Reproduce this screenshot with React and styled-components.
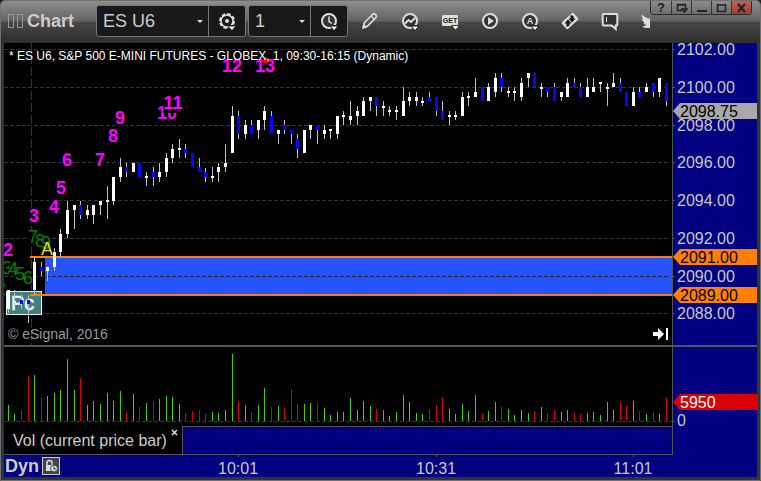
import React from 'react'
import styled, { createGlobalStyle } from 'styled-components'

const BARS = [
    // high, body top, body bottom, low, up/down, volume, volume up/down
    [290, 290, 309, 313, 'u', 16, 'u'],
    [290, 301, 303, 305, 'u', 7, 'u'],
    [295, 300, 304, 309, 'd', 11, 'd'],
    [295, 300, 304, 323, 'd', 45, 'd'],
    [257, 262, 290, 295, 'u', 46, 'u'],
    [262, 267, 271, 276, 'd', 23, 'd'],
    [267, 267, 271, 281, 'u', 25, 'u'],
    [248, 252, 267, 271, 'u', 28, 'u'],
    [229, 234, 252, 257, 'u', 31, 'u'],
    [201, 210, 234, 238, 'u', 62, 'u'],
    [205, 205, 210, 229, 'u', 31, 'u'],
    [201, 205, 215, 219, 'd', 43, 'd'],
    [205, 210, 215, 219, 'u', 16, 'u'],
    [205, 205, 215, 224, 'u', 20, 'u'],
    [201, 201, 205, 215, 'u', 17, 'u'],
    [186, 200, 202, 219, 'u', 28, 'u'],
    [177, 177, 201, 205, 'u', 20, 'u'],
    [158, 167, 177, 182, 'u', 30, 'u'],
    [163, 167, 172, 177, 'd', 9, 'd'],
    [163, 163, 172, 172, 'u', 27, 'u'],
    [163, 163, 177, 177, 'd', 14, 'd'],
    [172, 176, 178, 186, 'u', 18, 'u'],
    [167, 172, 177, 186, 'd', 20, 'd'],
    [163, 172, 177, 182, 'u', 22, 'u'],
    [153, 158, 172, 177, 'u', 25, 'u'],
    [144, 149, 158, 163, 'u', 24, 'u'],
    [139, 148, 150, 158, 'u', 17, 'u'],
    [144, 149, 153, 158, 'd', 8, 'd'],
    [153, 153, 167, 167, 'd', 10, 'd'],
    [158, 167, 172, 172, 'd', 11, 'd'],
    [168, 172, 177, 182, 'd', 7, 'd'],
    [167, 176, 178, 182, 'u', 9, 'u'],
    [163, 167, 172, 182, 'u', 8, 'u'],
    [144, 163, 167, 172, 'u', 11, 'u'],
    [106, 116, 153, 153, 'u', 67, 'u'],
    [111, 116, 134, 139, 'd', 20, 'd'],
    [120, 125, 134, 139, 'u', 16, 'u'],
    [120, 125, 134, 134, 'd', 9, 'd'],
    [120, 120, 130, 139, 'u', 16, 'u'],
    [106, 111, 120, 130, 'u', 33, 'u'],
    [111, 116, 134, 134, 'd', 14, 'd'],
    [130, 130, 134, 144, 'u', 15, 'u'],
    [120, 125, 130, 134, 'd', 13, 'd'],
    [130, 130, 134, 144, 'd', 32, 'd'],
    [134, 139, 149, 158, 'd', 17, 'd'],
    [130, 130, 153, 153, 'u', 17, 'u'],
    [125, 125, 130, 139, 'u', 18, 'u'],
    [125, 125, 130, 144, 'd', 18, 'd'],
    [125, 130, 134, 139, 'u', 13, 'u'],
    [129, 129, 131, 139, 'u', 6, 'u'],
    [116, 116, 134, 139, 'u', 9, 'u'],
    [111, 115, 117, 125, 'u', 9, 'u'],
    [101, 116, 120, 125, 'u', 23, 'u'],
    [106, 111, 116, 125, 'u', 11, 'u'],
    [97, 101, 116, 116, 'u', 20, 'u'],
    [97, 97, 101, 111, 'u', 15, 'u'],
    [97, 97, 106, 116, 'd', 12, 'd'],
    [101, 106, 108, 116, 'u', 11, 'u'],
    [106, 110, 112, 116, 'u', 5, 'u'],
    [106, 110, 112, 120, 'u', 9, 'u'],
    [87, 101, 116, 116, 'u', 26, 'u'],
    [92, 97, 101, 106, 'u', 19, 'u'],
    [92, 97, 101, 106, 'u', 8, 'u'],
    [97, 101, 103, 106, 'u', 7, 'u'],
    [92, 97, 101, 101, 'd', 12, 'd'],
    [97, 97, 111, 116, 'd', 16, 'd'],
    [101, 111, 120, 120, 'd', 24, 'd'],
    [111, 115, 117, 125, 'u', 12, 'u'],
    [111, 115, 117, 120, 'u', 7, 'u'],
    [92, 97, 116, 116, 'u', 17, 'u'],
    [92, 96, 98, 106, 'u', 10, 'u'],
    [78, 92, 97, 97, 'u', 26, 'u'],
    [87, 87, 101, 101, 'd', 8, 'd'],
    [83, 87, 101, 101, 'u', 10, 'u'],
    [73, 78, 92, 97, 'u', 19, 'u'],
    [73, 78, 87, 92, 'd', 14, 'd'],
    [87, 91, 93, 97, 'u', 12, 'u'],
    [87, 91, 93, 101, 'u', 6, 'u'],
    [78, 83, 97, 101, 'u', 11, 'u'],
    [73, 73, 78, 87, 'u', 8, 'u'],
    [73, 73, 87, 87, 'd', 10, 'd'],
    [83, 87, 89, 97, 'u', 14, 'u'],
    [87, 87, 92, 97, 'd', 8, 'd'],
    [83, 87, 101, 101, 'd', 11, 'd'],
    [92, 92, 97, 101, 'u', 9, 'u'],
    [78, 83, 97, 97, 'u', 11, 'u'],
    [78, 83, 87, 87, 'd', 8, 'd'],
    [83, 87, 97, 97, 'd', 7, 'd'],
    [78, 87, 97, 97, 'u', 8, 'u'],
    [78, 87, 92, 92, 'u', 9, 'u'],
    [82, 82, 84, 92, 'u', 6, 'u'],
    [83, 87, 89, 106, 'u', 19, 'u'],
    [73, 83, 87, 87, 'u', 11, 'u'],
    [78, 83, 92, 92, 'd', 19, 'd'],
    [92, 92, 106, 106, 'd', 15, 'd'],
    [87, 92, 106, 106, 'u', 20, 'u'],
    [87, 92, 97, 97, 'd', 10, 'd'],
    [83, 87, 92, 92, 'u', 7, 'u'],
    [83, 83, 92, 97, 'd', 9, 'd'],
    [78, 78, 92, 97, 'u', 7, 'u'],
    [83, 83, 101, 106, 'd', 24, 'd'],
]

const LEVELS = [
    ['2102.00', 49],
    ['2100.00', 87],
    ['2098.00', 125],
    ['2096.00', 162],
    ['2094.00', 200],
    ['2092.00', 238],
    ['2090.00', 276],
    ['2088.00', 313],
]

const COUNTS = [
    ['2', 8, 256],
    ['3', 34, 222],
    ['4', 54, 213],
    ['5', 61, 194],
    ['6', 67, 166],
    ['7', 100, 166],
    ['8', 113, 142],
    ['9', 120, 124],
    ['10', 167, 119],
    ['11', 173, 109],
    ['12', 232, 72],
    ['13', 265, 72],
]

const SETUPS = [
    ['2', 1, 295],
    ['3', 7, 274],
    ['4', 13, 275],
    ['5', 20, 280],
    ['6', 28, 284],
    ['7', 33, 243],
    ['8', 40, 247],
    ['9', 46, 249],
]

const TIMES = [['10:01', 35], ['10:31', 65], ['11:01', 95]]

const barX = i => Math.floor(8.3 + 6.58 * i)

const CircleIcon = ({ children }) => (
    <Glyph viewBox="0 0 20 20">
        <circle cx="10" cy="10" r="7" fill="#333" stroke="#ddd" strokeWidth="2" />
        {children}
    </Glyph>
)

const DropMark = () => (
    <g>
        <path d="M10.5 14h8.5v2l-3.5 3.5h-2z" fill="#222" />
        <path d="M12 15.5h6l-3 3.5z" fill="#fff" />
    </g>
)

const GearIcon = () => (
    <Glyph viewBox="0 0 20 20">
        <circle cx="10" cy="10" r="7" fill="none" stroke="#ddd" strokeWidth="2" strokeDasharray="3.6 1.9" />
        <circle cx="10" cy="10" r="6" fill="none" stroke="#ddd" strokeWidth="1.6" />
        <circle cx="10" cy="10" r="2" fill="#ddd" />
        <DropMark />
    </Glyph>
)

const ClockIcon = () => (
    <CircleIcon>
        <path d="M10 5.5v5l3 2" fill="none" stroke="#ddd" strokeWidth="1.5" />
        <DropMark />
    </CircleIcon>
)

const PencilIcon = () => (
    <Glyph viewBox="0 0 20 20">
        <path d="M3 17l1.2-5 8.300-8.500q1.500-1.300 3 0t.5 3l-8.500 8.700z" fill="#555" stroke="#ddd" strokeWidth="1.7" strokeLinejoin="round" />
        <path d="M11 5l3.500 3.500" stroke="#ddd" strokeWidth="1.4" />
        <path d="M3 17l.8-3.500 2.500 2.500z" fill="#ddd" stroke="#ddd" strokeWidth="1" />
    </Glyph>
)

const StudyIcon = () => (
    <CircleIcon>
        <path d="M5 12.500l3.500-3.500 2.500 2 4-4" fill="none" stroke="#ddd" strokeWidth="2" />
        <DropMark />
    </CircleIcon>
)

const GetIcon = () => (
    <Glyph viewBox="0 0 20 20">
        <rect x="2" y="4" width="16" height="11" rx="1" fill="#ddd" />
        <text x="10" y="12" textAnchor="middle" fontSize="7" fontWeight="bold" fill="#222">GET</text>
        <path d="M11 14h9l-4 5h-1z" fill="#333" />
        <path d="M12.500 15h6l-3 3.500z" fill="#fff" />
    </Glyph>
)

const PlayIcon = () => (
    <CircleIcon>
        <path d="M8 6l6 4-6 4z" fill="#ddd" />
    </CircleIcon>
)

const AutoIcon = () => (
    <CircleIcon>
        <text x="10" y="13" textAnchor="middle" fontSize="9" fontWeight="bold" fill="#ddd">A</text>
        <DropMark />
    </CircleIcon>
)

const LinkIcon = () => (
    <Glyph viewBox="0 0 20 20">
        <rect x="2" y="5.500" width="16" height="9" rx="1.500" fill="#ddd" transform="rotate(-42 10 10)" />
        <path d="M6.500 16v-3.500h-2l3.500-4 3.500 4h-2v2z" fill="#111" />
        <path d="M10.500 4v3.500h-2l3.500 4 3.500-4h-2v-2.500z" fill="#111" />
    </Glyph>
)

const NoteIcon = () => (
    <Glyph viewBox="0 0 20 20">
        <path d="M3.500 3h13q.8 0 .8.8v10q0 .8-.8.8h-.8v3.400l-4-3.400h-8.200q-.8 0-.8-.8v-10q0-.8.8-.8z" fill="#333" stroke="#ddd" strokeWidth="2" />
        <path d="M6.500 6v5" stroke="#ddd" strokeWidth="1" />
    </Glyph>
)

const BirdIcon = () => (
    <Glyph viewBox="0 0 20 20">
        <path d="M2 3.500c2 2.500 5 3.800 8 4 0-3 2-4.500 4.500-4.500 1.500 0 2 .5 2.800 1.200l2.200-.8-1.500 2.500c.5 6-4 11.100-10 11.100-2.500 0-4.500-.6-6-1.600 2 0 3.500-.5 4.600-1.400-1.600-.2-2.800-1.200-3.200-2.500h1.500c-1.800-.6-2.800-2-2.800-3.800l1.500.5c-1.500-1.200-2.200-3-1.600-4.700z" fill="#ddd" />
    </Glyph>
)

const TOOLS = [
    ['Draw', PencilIcon],
    ['Studies', StudyIcon],
    ['GET', GetIcon],
    ['Replay', PlayIcon],
    ['Auto', AutoIcon],
    ['Link', LinkIcon],
    ['Notes', NoteIcon],
    ['Share', BirdIcon],
]

const Combo = ({ label, value, width, action, children }) => (
    <ComboBox>
        <SelectWrap $width={width}>
            <Select aria-label={label} defaultValue={value}>
                <option>{value}</option>
            </Select>
            <Caret />
        </SelectWrap>
        <ComboButton aria-label={action}>{children}</ComboButton>
    </ComboBox>
)

const Toolbar = () => (
    <Header>
        <Tools>
            <Grip><i /><i /></Grip>
            <Title>Chart</Title>
            <Combo label="Symbol" value="ES U6" width={111} action="Symbol settings"><GearIcon /></Combo>
            <Combo label="Interval" value="1" width={61} action="Time template"><ClockIcon /></Combo>
            {TOOLS.map(([name, Icon]) => (
                <ToolButton key={name} aria-label={name}><Icon /></ToolButton>
            ))}
        </Tools>
        <WindowButtons>
            <WindowButton aria-label="Help">?</WindowButton>
            <WindowButton aria-label="Options">
                <svg width="12" height="10"><path d="M6 7.500h-4.500v-6h8v4M1 2h9M6 6h5l-2.500 3z" fill="none" stroke="#222" strokeWidth="1.500" /></svg>
            </WindowButton>
            <WindowButton aria-label="Minimize">
                <svg width="12" height="10"><path d="M1 8h10" stroke="#222" strokeWidth="2" /></svg>
            </WindowButton>
            <WindowButton aria-label="Maximize">
                <svg width="12" height="10"><path d="M1.500 1v7.500h8v-7.500M1 2h9" fill="none" stroke="#222" strokeWidth="1.500" /></svg>
            </WindowButton>
            <WindowButton $close aria-label="Close">
                <svg width="12" height="10"><path d="M2 1l7 8M9 1l-7 8" stroke="#222" strokeWidth="2" /></svg>
            </WindowButton>
        </WindowButtons>
    </Header>
)

const PricePlot = () => (
    <Plot>
        <g transform="translate(-4 -43)">
            <line x1="31.5" x2="31.5" y1="43" y2="345" stroke="#333" strokeDasharray="9 3" />
            {LEVELS.map(([price, y]) => (
                <line key={price} x1="4" x2="100%" y1={y + 0.5} y2={y + 0.5} stroke="#333" strokeDasharray="4 2" />
            ))}
            <rect x="45" y="258" width="100%" height="36" fill="#2452ff" />
            <line x1="46" x2="100%" y1="276.5" y2="276.5" stroke="#222" strokeDasharray="4 2" />
            {SETUPS.map(([n, x, y]) => (
                <g key={n}>
                    <rect x={x - 4} y={y - 12} width="9" height="13" fill="#000" />
                    <SetupText x={x} y={y}>{n}</SetupText>
                </g>
            ))}
            <SignalText x="47" y="255">A</SignalText>
            {COUNTS.map(([n, x, y]) => (
                <g key={n}>
                    <rect x={x - 5 * n.length} y={y - 13} width={10 * n.length} height="17" fill="#000" />
                    <CountText x={x} y={y}>{n}</CountText>
                </g>
            ))}
            <path d="M264 57h3v3h2l-4 4.500-4-4.500h3z" fill="#f00" />
            <rect x="6.500" y="291.500" width="35" height="23" fill="#408080" stroke="#ddf0e8" />
            <PivotText x="11" y="310">Pc</PivotText>
            <rect x="30" y="256" width="100%" height="2" fill="#ff8000" />
            <rect x="30" y="294" width="100%" height="2" fill="#ff8000" />
            {BARS.map(([high, top, bottom, low, dir], i) => (
                <g key={i}>
                    <rect x={barX(i)} y={high} width="1" height={low - high} fill="#c0c0c0" />
                    <rect x={barX(i) - 1} y={top} width="3" height={bottom - top} fill={dir === 'u' ? '#fff' : '#0008ff'} />
                </g>
            ))}
        </g>
    </Plot>
)

const Tag = ({ y, color, ink, children }) => (
    <g transform={`translate(0 ${y})`}>
        <path d="M0 8l7-8h78v16h-78z" fill={color} />
        <AxisText x="7" y="14" $ink={ink}>{children}</AxisText>
    </g>
)

const App = () => (
    <Frame>
        <GlobalStyle />
        <Toolbar />
        <Body>
            <Row $height={302}>
                <Pane>
                    <PricePlot />
                    <Caption>* ES U6, S&amp;P 500 E-MINI FUTURES - GLOBEX, 1, 09:30-16:15 (Dynamic)</Caption>
                    <PaneFoot>
                        <Copyright>© eSignal, 2016</Copyright>
                        <LastBarButton aria-label="Go to last bar">
                            <svg width="16" height="14"><path d="M0 5h5v-4l6 6-6 6v-4h-5zM13 1h2v12h-2z" fill="#fff" /></svg>
                        </LastBarButton>
                    </PaneFoot>
                </Pane>
                <Axis>
                    <g transform="translate(0 -43)">
                        {LEVELS.map(([price, y]) => (
                            <g key={price}>
                                <rect y={y} width="2" height="1" fill="#555" />
                                <AxisText x="4" y={y + 6}>{price}</AxisText>
                            </g>
                        ))}
                        <Tag y={103} color="#a8a8aa" ink="#000">2098.75</Tag>
                        <Tag y={249} color="#ff8000" ink="#000">2091.00</Tag>
                        <Tag y={287} color="#ff8000" ink="#000">2089.00</Tag>
                    </g>
                </Axis>
            </Row>
            <Separator />
            <Row $height={79}>
                <Pane>
                    <Plot>
                        <line x1="0" x2="100%" y1="74.5" y2="74.5" stroke="#333" strokeDasharray="4 2" />
                        {BARS.map((bar, i) => (
                            <rect key={i} x={barX(i) - 4} y={74 - bar[5]} width="1" height={bar[5]} fill={bar[6] === 'u' ? '#40d000' : '#d80000'} />
                        ))}
                    </Plot>
                </Pane>
                <VolumeAxis>
                    <rect y="74" width="2" height="1" fill="#555" />
                    <AxisText x="4" y="79">0</AxisText>
                    <Tag y={47} color="#d80000" ink="#fff">5950</Tag>
                </VolumeAxis>
            </Row>
            <Row $height={28}>
                <StudyTab>
                    Vol (current price bar)
                    <CloseButton aria-label="Remove study">
                        <svg width="7" height="7"><path d="M1 1l5 5M6 1l-5 5" stroke="#ddd" strokeWidth="1.500" /></svg>
                    </CloseButton>
                </StudyTab>
                <StudyStrip />
                <AxisSpace />
            </Row>
            <Row $height={23}>
                <TimeRow>
                    <Mode>Dyn</Mode>
                    <LockButton aria-label="Lock time template">
                        <svg width="16" height="16">
                            <path d="M4 8v-3q0-2.500 2.500-2.500t2.500 2.500v2" fill="none" stroke="#ddd" strokeWidth="1.500" />
                            <path d="M3 7h6v6h-6z" fill="#ddd" />
                            <circle cx="11" cy="10.500" r="3.500" fill="#ddd" stroke="#444" />
                            <path d="M11 8.500v2.500h2" fill="none" stroke="#333" />
                        </svg>
                    </LockButton>
                    <TimeAxis>
                        {TIMES.map(([label, i]) => (
                            <g key={label} transform={`translate(${barX(i) - 60} 0)`}>
                                <rect width="1" height="2" fill="#555" />
                                <AxisText x="0" y="19" $anchor="middle">{label}</AxisText>
                            </g>
                        ))}
                    </TimeAxis>
                </TimeRow>
                <AxisSpace />
            </Row>
        </Body>
    </Frame>
)

const GlobalStyle = createGlobalStyle`
    * {
        box-sizing: border-box;
    }
    body {
        margin: 0;
        background: #222;
        font-family: "Liberation Sans", Arial, sans-serif;
    }
    button, select {
        margin: 0;
        padding: 0;
        border: 0;
        background: none;
        font-family: inherit;
    }
    svg {
        display: block;
        flex: none;
    }
`

const Frame = styled.div`
    border: 1px solid #707070;
    border-radius: 5px 5px 0 0;
    background: #333;
    overflow: hidden;
`

const Header = styled.header`
    display: flex;
    align-items: flex-start;
    height: 42px;
    background: linear-gradient(#8e8e8e, #626262 48%, #474747 50%, #2d2d2d);
`

const Tools = styled.div`
    display: flex;
    flex: 1;
    min-width: 0;
    align-items: center;
    height: 40px;
    padding-left: 7px;
    overflow: hidden;
`

const Grip = styled.div`
    display: flex;
    flex: none;
    gap: 3px;
    width: 19px;
    i {
        width: 6px;
        height: 14px;
        border: 1px solid #999;
    }
`

const Title = styled.h1`
    flex: none;
    width: 69px;
    margin: 0;
    font-size: 18px;
    line-height: 20px;
    color: #ccc;
`

const ComboBox = styled.div`
    display: flex;
    flex: none;
    height: 32px;
    margin-right: 2px;
    border: 1px solid #777;
    border-radius: 3px;
    background: #181818;
`

const SelectWrap = styled.div`
    display: flex;
    align-items: center;
    width: ${props => props.$width}px;
    padding-right: 5px;
`

const Select = styled.select`
    flex: 1;
    min-width: 0;
    height: 30px;
    padding-left: 6px;
    appearance: none;
    font-size: 18px;
    color: #c8ccd0;
    outline: none;
`

const Caret = styled.span`
    border: 3px solid transparent;
    border-top-color: #ddd;
    border-bottom: 0;
`

const ComboButton = styled.button`
    display: flex;
    align-items: center;
    justify-content: center;
    width: 37px;
    border-left: 1px solid #777;
`

const ToolButton = styled.button`
    display: flex;
    flex: none;
    align-items: center;
    justify-content: center;
    width: 40px;
    height: 32px;
`

const Glyph = styled.svg`
    width: 20px;
    height: 20px;
`

const WindowButtons = styled.div`
    display: flex;
    flex: none;
    margin-right: 8px;
    border: 1px solid #2a2a2a;
    border-top: 0;
    border-radius: 0 0 4px 4px;
    overflow: hidden;
`

const WindowButton = styled.button`
    display: flex;
    align-items: center;
    justify-content: center;
    width: 20px;
    height: 13px;
    font-size: 13px;
    font-weight: bold;
    line-height: 13px;
    color: #222;
    background: ${props => props.$close ? 'linear-gradient(#c0614f, #a04030)' : 'linear-gradient(#8c8c8c, #6c6c6c)'};
    & + & {
        border-left: 1px solid #333;
    }
`

const Body = styled.main`
    padding: 0 3px 3px;
`

const Row = styled.div`
    display: flex;
    height: ${props => props.$height}px;
`

const Pane = styled.section`
    position: relative;
    display: flex;
    flex: 1;
    min-width: 0;
    flex-direction: column;
    justify-content: space-between;
    padding: 6px 3px 3px 4px;
    background: #000;
    border-right: 1px solid #555;
`

const Plot = styled.svg`
    position: absolute;
    inset: 0;
    width: 100%;
    height: 100%;
`

const Caption = styled.div`
    position: relative;
    font-size: 12px;
    line-height: 14px;
    padding-left: 1px;
    white-space: nowrap;
    color: #fff;
`

const PaneFoot = styled.div`
    position: relative;
    display: flex;
    align-items: center;
    justify-content: space-between;
`

const Copyright = styled.small`
    font-size: 14px;
    line-height: 16px;
    color: #999;
`

const LastBarButton = styled.button`
    display: flex;
`

const Axis = styled.svg`
    width: 84px;
    height: 100%;
    background: #000080;
`

const VolumeAxis = styled(Axis)`
    position: relative;
    overflow: visible;
`

const AxisSpace = styled.div`
    width: 84px;
    background: #000080;
`

const AxisText = styled.text`
    font-size: 16px;
    fill: ${props => props.$ink || '#c8c8c8'};
    text-anchor: ${props => props.$anchor || 'start'};
`

const CountText = styled.text`
    font-size: 18px;
    font-weight: bold;
    fill: #f0f;
    text-anchor: middle;
`

const SetupText = styled.text`
    font-size: 18px;
    fill: #008000;
    text-anchor: middle;
`

const SignalText = styled(SetupText)`
    fill: #e0e000;
`

const PivotText = styled.text`
    font-size: 20px;
    fill: #fff;
    stroke: #fff;
    stroke-width: 0.5px;
`

const Separator = styled.div`
    height: 2px;
    background: #555;
`

const StudyTab = styled.div`
    display: flex;
    justify-content: space-between;
    flex: none;
    width: 178px;
    padding: 2px 4px 0 9px;
    background: #000;
    font-size: 16px;
    line-height: 26px;
    color: #ccc;
    white-space: nowrap;
`

const CloseButton = styled.button`
    display: flex;
    align-self: flex-start;
    padding-top: 1px;
`

const StudyStrip = styled.div`
    flex: 1;
    border: 1px solid #555;
    border-bottom: 0;
    background: #000080;
`

const TimeRow = styled.div`
    display: flex;
    flex: 1;
    min-width: 0;
    border-top: 1px solid #555;
    background: #000080;
`

const Mode = styled.strong`
    width: 38px;
    padding-left: 1px;
    font-size: 18px;
    line-height: 22px;
    color: #ccc;
`

const LockButton = styled.button`
    align-self: center;
    width: 18px;
    height: 18px;
    border: 1px solid #ccc;
    background: #444;
`

const TimeAxis = styled.svg`
    flex: 1;
    min-width: 0;
    height: 22px;
`

export default App
